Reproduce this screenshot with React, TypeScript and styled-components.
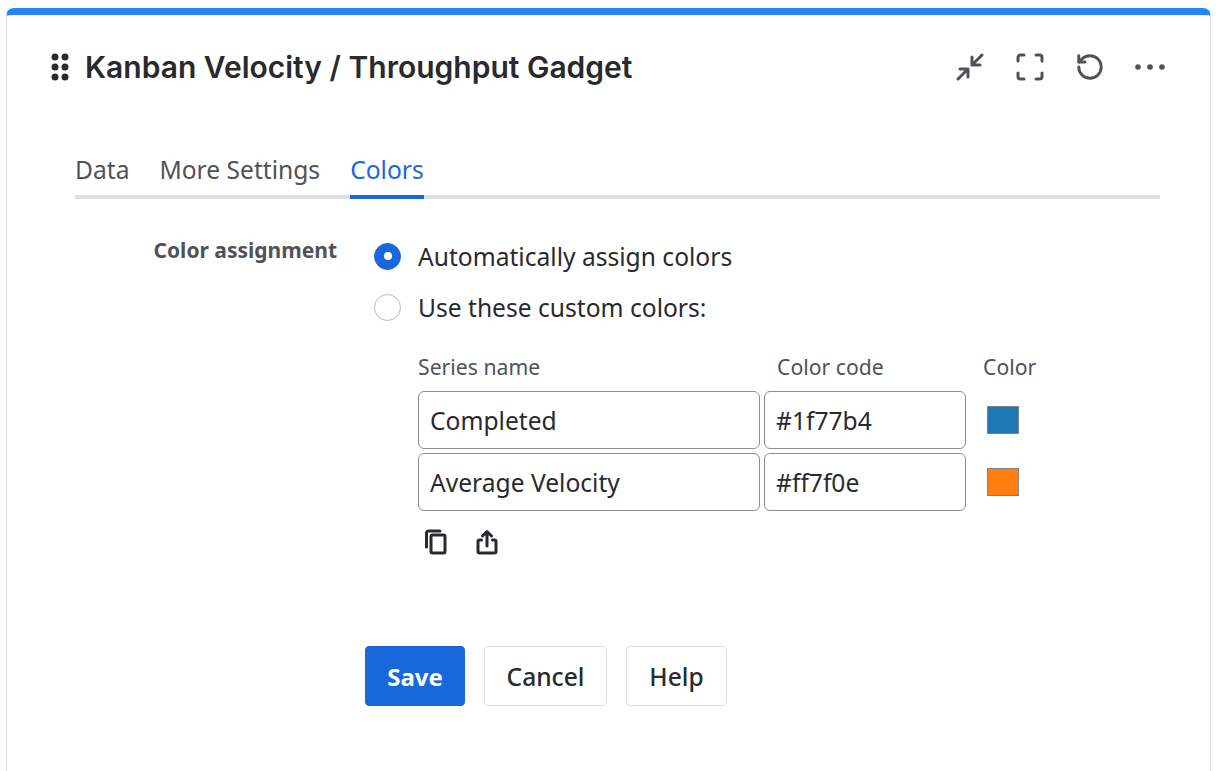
import React from 'react';
import styled, { createGlobalStyle } from 'styled-components';

const GlobalStyle = createGlobalStyle`
  html, body {
    margin: 0;
    padding: 0;
    height: 771px;
    overflow: hidden;
    background: #fff;
  }
  * {
    box-sizing: border-box;
  }
`;

const Card = styled.div`
  margin: 8px 17px 0 6px;
  height: 800px;
  background: #fff;
  border: 1px solid #dddee1;
  border-top: 7px solid #2684ff;
  border-radius: 8px 8px 0 0;
  padding: 0 45px 0 44px;
  font-family: 'Noto Sans', sans-serif;
  color: #292a2e;
`;

const Header = styled.header`
  display: flex;
  align-items: center;
  justify-content: space-between;
  height: 104px;
`;

const TitleGroup = styled.div`
  display: flex;
  align-items: center;
  gap: 16px;
`;

const Title = styled.h1`
  margin: 0;
  font-family: Inter, sans-serif;
  font-size: 30px;
  font-weight: 600;
  line-height: 36px;
  color: #292a2e;
`;

const Actions = styled.div`
  display: flex;
  align-items: center;
  gap: 30px;
`;

const ActionIcon = styled.svg`
  display: block;
  width: 30px;
  height: 30px;
  fill: none;
  stroke: #505258;
  stroke-width: 3;
  stroke-linecap: round;
  stroke-linejoin: round;
`;

const ReloadIcon = styled(ActionIcon)`
  stroke-width: 2.3;
`;

const DotsIcon = styled(ActionIcon)`
  stroke: none;
  fill: #505258;
`;

const Tabs = styled.nav`
  display: flex;
  gap: 30px;
  margin: 23px 5px 0 24px;
  height: 57px;
  padding-top: 5px;
  border-bottom: 4px solid #dddee1;
  font-size: 24.6px;
`;

const Tab = styled.div<{ $active?: boolean }>`
  height: 52px;
  line-height: 46px;
  color: ${(p) => (p.$active ? '#1868db' : '#505258')};
  border-bottom: 4px solid ${(p) => (p.$active ? '#1868db' : 'transparent')};
`;

const Form = styled.div`
  display: grid;
  grid-template-columns: 286px 1fr;
  column-gap: 37px;
  margin-top: 39px;
`;

const FieldLabel = styled.div`
  text-align: right;
  font-size: 21px;
  font-weight: 700;
  line-height: 28px;
  color: #505258;
  margin-top: -2px;
`;

const Options = styled.div`
  display: flex;
  flex-direction: column;
  gap: 15px;
`;

const RadioRow = styled.label`
  display: flex;
  align-items: center;
  gap: 17px;
  height: 36px;
  font-size: 24.6px;
  color: #292a2e;
`;

const Radio = styled.span<{ $checked?: boolean }>`
  width: 27px;
  height: 27px;
  border-radius: 50%;
  flex: none;
  display: flex;
  align-items: center;
  justify-content: center;
  background: ${(p) => (p.$checked ? '#1868db' : '#fff')};
  border: 1px solid ${(p) => (p.$checked ? '#1868db' : '#b7b9be')};

  &::after {
    content: '';
    display: ${(p) => (p.$checked ? 'block' : 'none')};
    width: 8px;
    height: 8px;
    border-radius: 50%;
    background: #fff;
  }
`;

const ColorTable = styled.div`
  margin: 27px 0 0 44px;
  display: grid;
  grid-template-columns: 342px 202px auto;
  grid-template-rows: 35px 58px 58px;
  column-gap: 4px;
  row-gap: 4px;
  align-items: center;
`;

const ColumnHead = styled.div<{ $indent?: number }>`
  padding-left: ${(p) => p.$indent ?? 0}px;
  align-self: start;
  font-size: 21.2px;
  line-height: 30px;
  color: #505258;
`;

const TextField = styled.input`
  width: 100%;
  height: 58px;
  padding: 0 11px;
  border: 1px solid #8c8f97;
  border-radius: 6px;
  background: #fff;
  font-family: inherit;
  font-size: 24.6px;
  color: #292a2e;
  outline: none;
`;

const Swatch = styled.div<{ $color: string }>`
  width: 32px;
  height: 28px;
  margin-left: 17px;
  background: ${(p) => p.$color};
  border: 1px solid #7d818a;
`;

const SmallActions = styled.div`
  display: flex;
  gap: 25px;
  margin: 18px 0 0 49px;
`;

const SmallIcon = styled.svg`
  display: block;
  width: 26px;
  height: 26px;
  fill: none;
  stroke: #292a2e;
  stroke-width: 3;
  stroke-linecap: round;
  stroke-linejoin: round;
`;

const Buttons = styled.div`
  display: flex;
  gap: 19px;
  margin: 91px 0 0 314px;
`;

const Button = styled.button<{ $primary?: boolean; $width: number }>`
  width: ${(p) => p.$width}px;
  height: 60px;
  padding: 0;
  border-radius: 4px;
  border: 1px solid ${(p) => (p.$primary ? '#1868db' : '#dddee1')};
  background: ${(p) => (p.$primary ? '#1868db' : '#fff')};
  color: ${(p) => (p.$primary ? '#fff' : '#292a2e')};
  font-family: inherit;
  font-size: ${(p) => (p.$primary ? 24 : 24.6)}px;
  font-weight: ${(p) => (p.$primary ? 700 : 500)};
`;

const GripIcon = styled.svg`
  display: block;
  width: 18px;
  height: 28px;
  fill: #292a2e;
`;

const Grip = () => (
  <GripIcon viewBox="0 0 18 28">
    {[4, 14, 24].map((cy) =>
      [4, 14].map((cx) => <circle key={`${cx}-${cy}`} cx={cx} cy={cy} r="3.5" />)
    )}
  </GripIcon>
);

const App: React.FC = () => {
  return (
    <>
      <GlobalStyle />
      <Card>
        <Header>
          <TitleGroup>
            <Grip />
            <Title>Kanban Velocity / Throughput Gadget</Title>
          </TitleGroup>
          <Actions>
            <ActionIcon viewBox="0 0 30 30">
              <path d="M27 3 17 13M17 5V13H25" />
              <path d="M3 27 13 17M5 17H13V25" />
            </ActionIcon>
            <ActionIcon viewBox="0 0 30 30">
              <path d="M9 3H5.500A2.500 2.500 0 0 0 3 5.500V9M21 3H24.500A2.500 2.500 0 0 1 27 5.500V9M3 21V24.500A2.500 2.500 0 0 0 5.500 27H9M27 21V24.500A2.500 2.500 0 0 1 24.500 27H21" />
            </ActionIcon>
            <ReloadIcon viewBox="0 0 24 24">
              <path d="M3 12a9 9 0 1 0 9-9 9.750 9.750 0 0 0-6.740 2.740L3 8" />
              <path d="M3 3v5h5" />
            </ReloadIcon>
            <DotsIcon viewBox="0 0 30 30">
              <circle cx="3" cy="15" r="2.800" />
              <circle cx="15" cy="15" r="2.800" />
              <circle cx="27" cy="15" r="2.800" />
            </DotsIcon>
          </Actions>
        </Header>
        <Tabs>
          <Tab>Data</Tab>
          <Tab>More Settings</Tab>
          <Tab $active>Colors</Tab>
        </Tabs>
        <Form>
          <FieldLabel>Color assignment</FieldLabel>
          <div>
            <Options>
              <RadioRow>
                <Radio $checked />
                Automatically assign colors
              </RadioRow>
              <RadioRow>
                <Radio />
                Use these custom colors:
              </RadioRow>
            </Options>
            <ColorTable>
              <ColumnHead>Series name</ColumnHead>
              <ColumnHead $indent={13}>Color code</ColumnHead>
              <ColumnHead $indent={13}>Color</ColumnHead>
              <TextField defaultValue="Completed" />
              <TextField defaultValue="#1f77b4" />
              <Swatch $color="#1f77b4" />
              <TextField defaultValue="Average Velocity" />
              <TextField defaultValue="#ff7f0e" />
              <Swatch $color="#ff7f0e" />
            </ColorTable>
            <SmallActions>
              <SmallIcon viewBox="0 0 26 26">
                <rect x="8" y="6" width="14" height="18" rx="1.500" />
                <path d="M17 2H5.500A2 2 0 0 0 3.500 4V18" />
              </SmallIcon>
              <SmallIcon viewBox="0 0 26 26">
                <path d="M7.500 11H5.500A1.500 1.500 0 0 0 4 12.500V22.500A1.500 1.500 0 0 0 5.500 24H20.500A1.500 1.500 0 0 0 22 22.500V12.500A1.500 1.500 0 0 0 20.500 11H18.500" />
                <path d="M13 17V2.500M8.500 7 13 2.500 17.500 7" />
              </SmallIcon>
            </SmallActions>
          </div>
        </Form>
        <Buttons>
          <Button $primary $width={100}>Save</Button>
          <Button $width={123}>Cancel</Button>
          <Button $width={101}>Help</Button>
        </Buttons>
      </Card>
    </>
  );
};

export default App;
